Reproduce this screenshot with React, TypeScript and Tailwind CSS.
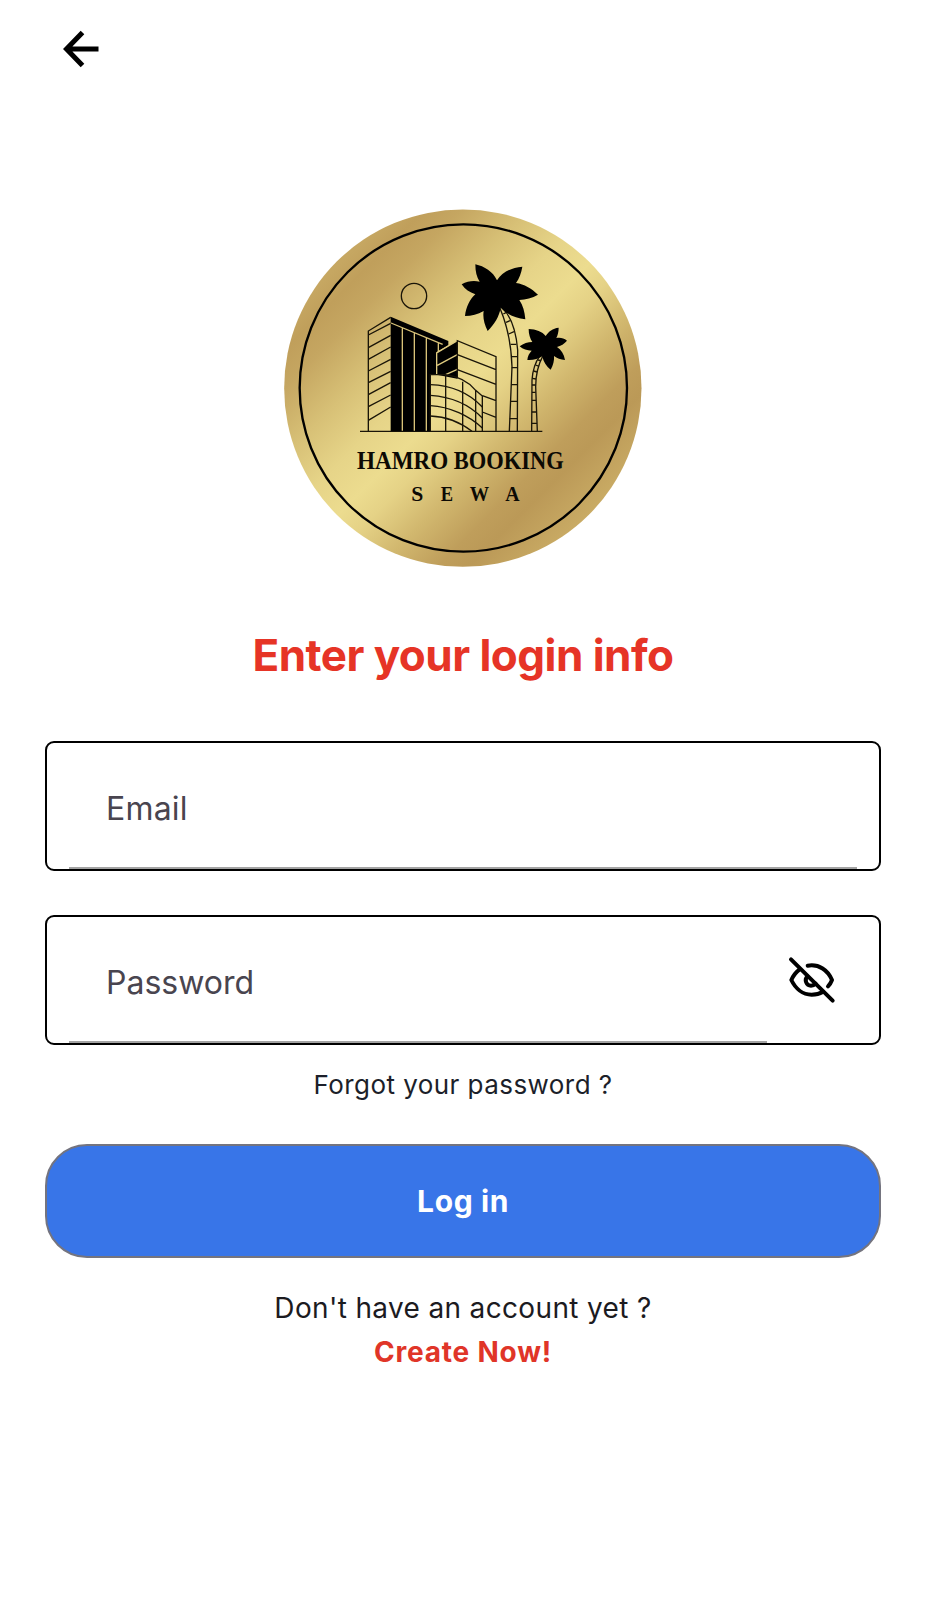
function Logo() {
  return (
    <svg viewBox="0 0 1170 1140" className="h-[380px] w-[390px]" fill="none">
      <defs>
        <linearGradient id="gold" gradientUnits="userSpaceOnUse" x1="200" y1="200" x2="980" y2="980">
          <stop offset="0" stopColor="#c6a762" />
          <stop offset="0.06" stopColor="#c09f5b" />
          <stop offset="0.13" stopColor="#c5a661" />
          <stop offset="0.26" stopColor="#d7c076" />
          <stop offset="0.38" stopColor="#e6d488" />
          <stop offset="0.48" stopColor="#ecdc8f" />
          <stop offset="0.55" stopColor="#e5d286" />
          <stop offset="0.66" stopColor="#d1b76e" />
          <stop offset="0.77" stopColor="#bf9e5b" />
          <stop offset="0.83" stopColor="#bb9957" />
          <stop offset="1" stopColor="#cdb068" />
        </linearGradient>
      </defs>
      <circle cx="578.5" cy="564.5" r="536" fill="url(#gold)" />
      <circle cx="580" cy="564" r="491" stroke="#000" strokeWidth="7" />
      <circle cx="432" cy="288" r="38" stroke="#1a1508" strokeWidth="4" />

      <g stroke="#1a1508" strokeWidth="4">
        <path d="M270 694H817" />
        <path d="M295 694V393L362 352M295 405L362 370M295 443L362 406M295 478L362 441M295 513L362 478M295 548L362 514M295 584L362 548M295 620L362 585M295 661L362 621" />
      </g>

      <path d="M362 350L535 423V436L500 456V524H481V694H362Z" fill="#000" />
      <g stroke="#d9c379" strokeWidth="4">
        <path d="M363 369L518 433M397 384V692M433 398V692M469 413V692M505 430V454" />
      </g>
      <path d="M500 459L562 422V536L500 524Z" fill="#000" />
      <path d="M500 524V459L562 422M502 496L562 464M527 524L562 508" stroke="#e0cc80" strokeWidth="4" />

      <g stroke="#1a1508" strokeWidth="4">
        <path d="M562 535V422L678 470V694M562 464L678 509M562 509L678 553M637 587L678 602M637 636L678 652" />
        <path d="M481 694V524H527Q585 532 617 571L637 588V694M527 524V694M578 545V694M617 571V694" />
        <path d="M481 554C545 556 598 580 637 621M481 586C545 590 600 616 637 654M481 617C540 620 598 648 637 684M481 648C530 650 570 666 606 694" />
      </g>

      <g stroke="#1a1508" strokeWidth="4">
        <path d="M718 694L726 500C724 430 713 380 690 325M742 694L743 450C739 400 724 352 699 325" />
        <path d="M700 342L709 337M708 367L720 362M716 402L732 395M722 433L739 433M725 470H743M725 503H743M724 554H743M722 604H743M719 656H743" />
        <path d="M785 694L786 540C788 510 797 485 810 467M802 694L797 560C797 520 804 495 819 467" />
        <path d="M804 480L813 482M797 495L807 499M791 513L801 516M787 535L798 537M786 555H797M786 577H797M786 601H798M786 636H800M785 670H801" />
      </g>

      <g transform="translate(555 165)" fill="#000">
        <path d="M61 28C88 34 114 50 126 76C140 52 168 38 202 35C199 54 193 70 183 84C208 88 229 100 249 119C232 129 212 134 193 135C204 151 209 170 211 193C180 188 155 178 137 158C133 184 118 208 98 228C87 206 83 186 86 168C68 179 50 183 30 183C33 156 44 134 61 118C44 112 30 103 20 88C38 78 56 76 74 80C65 66 61 50 61 28Z" />
        <path d="M221 222C243 223 262 230 272 243C281 229 293 220 311 218C311 231 308 241 304 249C316 247 326 249 336 257C329 266 317 273 306 276C318 284 327 297 330 315C317 314 306 310 297 303C298 317 295 330 287 344C274 334 265 321 262 304C250 312 235 316 217 315C218 303 223 294 230 287C216 286 204 283 194 274C205 265 219 261 232 261C225 250 221 238 221 222Z" />
      </g>

      <g fill="#0c0a04" fontFamily="'Liberation Serif', serif" fontWeight="700">
        <text x="261" y="806" fontSize="74" textLength="274" lengthAdjust="spacingAndGlyphs">HAMRO</text>
        <text x="551" y="806" fontSize="74" textLength="330" lengthAdjust="spacingAndGlyphs">BOOKING</text>
        <g fontSize="65">
          <text x="424" y="903">S</text>
          <text x="512" y="903" textLength="37" lengthAdjust="spacingAndGlyphs">E</text>
          <text x="599" y="903" textLength="58" lengthAdjust="spacingAndGlyphs">W</text>
          <text x="706" y="903" textLength="43" lengthAdjust="spacingAndGlyphs">A</text>
        </g>
      </g>
    </svg>
  );
}

function EyeOffIcon() {
  return (
    <svg
      viewBox="140 165 150 150"
      className="mt-[38px] ml-[20px] h-[50px] w-[50px]"
      fill="none"
      stroke="#000"
      strokeWidth="12"
      strokeLinecap="round"
      strokeLinejoin="round"
    >
      <path d="M152 178L277 302" />
      <path d="M178 208C166 217 158 228 153 240C165 265 187 284 214 284C226 284 237 282 247 276" />
      <path d="M202 197C236 191 263 211 275 240C272 248 268 254 263 259" />
      <path d="M201 229C191 240 198 257 212 257C218 257 222 255 226 251" />
    </svg>
  );
}

export default function App() {
  return (
    <main className="flex min-h-[1600px] w-full flex-col bg-white px-[45px] font-['Inter',sans-serif]">
      <header className="flex h-[200px] pt-[29px] pl-[15px]">
        <button aria-label="Back" className="h-10 w-10">
          <svg viewBox="0 0 40 40" className="h-10 w-10" fill="none" stroke="#000" strokeWidth="5">
            <path d="M38.5 20H7M22.5 3.5L6.5 20L22.5 36.5" />
          </svg>
        </button>
      </header>

      <div className="flex h-[380px] justify-center pl-[4px]">
        <Logo />
      </div>

      <h1 className="mt-[47px] text-center text-[44px] leading-[56px] font-bold tracking-[-0.53px] text-[#e63426]">
        Enter your login info
      </h1>

      <form className="mt-[58px] flex flex-col">
        <label className="flex h-[130px] flex-col justify-between rounded-[9px] border-2 border-black px-[22px]">
          <span className="pt-[46px] pl-[37px] text-[32px] leading-10 tracking-[0.2px] text-[#49454f]">Email</span>
          <span className="h-[2px] w-full bg-[#a3a3a3]" />
        </label>

        <label className="mt-11 flex h-[130px] rounded-[9px] border-2 border-black pl-[22px]">
          <span className="flex w-[698px] flex-col justify-between">
            <span className="pt-[46px] pl-[37px] text-[32px] leading-10 text-[#49454f]">Password</span>
            <span className="h-[2px] w-full bg-[#a3a3a3]" />
          </span>
          <EyeOffIcon />
        </label>

        <a className="mt-[24px] text-center text-[26px] leading-8 tracking-[0.44px] text-[#1c1f2a]">
          Forgot your password ?
        </a>

        <button
          type="button"
          className="mt-[43px] h-[114px] rounded-[42px] border-2 border-[#74747f] bg-[#3875e8] text-[30px] font-bold tracking-[0.6px] text-white"
        >
          Log in
        </button>
      </form>

      <footer className="mt-[28px] flex flex-col text-center text-[28px] leading-[44px]">
        <p className="tracking-[0.35px] text-[#1c1b1f]">Don't have an account yet ?</p>
        <a className="font-bold tracking-[0.8px] text-[#e03528]">Create Now!</a>
      </footer>
    </main>
  );
}
